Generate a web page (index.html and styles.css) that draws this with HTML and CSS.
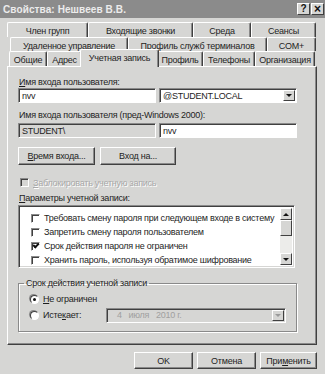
FILE: index.html
```html
<!DOCTYPE html>
<html lang="ru">
<head>
  <meta charset="UTF-8">
  <title>Свойства: Нешвеев В.В.</title>
  <link rel="stylesheet" href="styles.css">
</head>
<body>
  <div class="window">
    <div class="titlebar">
      <span class="title">Свойства: Нешвеев В.В.</span>
      <div class="caption-btns">
        <span class="cbtn">?</span>
        <span class="cbtn cbtn-close">×</span>
      </div>
    </div>

    <div class="tabs">
      <div class="tab-row row-1">
        <span class="tab t-groups">Член групп</span>
        <span class="tab t-calls">Входящие звонки</span>
        <span class="tab t-env">Среда</span>
        <span class="tab t-sessions">Сеансы</span>
      </div>
      <div class="tab-row row-2">
        <span class="tab t-remote">Удаленное управление</span>
        <span class="tab t-ts">Профиль служб терминалов</span>
        <span class="tab t-com">COM+</span>
      </div>
      <div class="tab-row row-3">
        <span class="tab t-general">Общие</span>
        <span class="tab t-address">Адрес</span>
        <span class="tab t-account active">Учетная запись</span>
        <span class="tab t-profile">Профиль</span>
        <span class="tab t-phones">Телефоны</span>
        <span class="tab t-org">Организация</span>
      </div>
    </div>

    <div class="panel">
      <div class="label first"><u>И</u>мя входа пользователя:</div>
      <div class="field-row">
        <div class="input">nvv</div>
        <div class="input combo">
          <span>@STUDENT.LOCAL</span>
          <span class="drop-btn"><span class="arrow"></span></span>
        </div>
      </div>

      <div class="label second">Имя входа пользователя (пред-Windows 2000):</div>
      <div class="field-row tight">
        <div class="input readonly">STUDENT\</div>
        <div class="input">nvv</div>
      </div>

      <div class="btn-row">
        <span class="btn btn-hours"><u>В</u>ремя входа...</span>
        <span class="btn btn-logon">Вход на...</span>
      </div>

      <div class="check-row disabled">
        <span class="checkbox"></span>
        <span class="muted"><u>З</u>аблокировать учетную запись</span>
      </div>

      <div class="label third"><u>П</u>араметры учетной записи:</div>
      <div class="listbox">
        <div class="list-items">
          <div class="list-item"><span class="checkbox"></span>Требовать смену пароля при следующем входе в систему</div>
          <div class="list-item"><span class="checkbox"></span>Запретить смену пароля пользователем</div>
          <div class="list-item"><span class="checkbox checked"></span>Срок действия пароля не ограничен</div>
          <div class="list-item"><span class="checkbox"></span>Хранить пароль, используя обратимое шифрование</div>
        </div>
        <div class="scrollbar">
          <span class="sb-btn"><span class="arrow up"></span></span>
          <span class="sb-thumb"></span>
          <span class="sb-track"></span>
          <span class="sb-btn"><span class="arrow"></span></span>
        </div>
      </div>

      <fieldset class="group">
        <legend>Срок действия учетной записи</legend>
        <div class="radio-row">
          <span class="radio checked"></span>
          <span><u>Н</u>е ограничен</span>
        </div>
        <div class="radio-row">
          <span class="radio"></span>
          <span class="radio-label">Исте<u>к</u>ает:</span>
          <div class="datepicker">
            <span class="date-text">4&nbsp;&nbsp;&nbsp;июля&nbsp;&nbsp;&nbsp;2010 г.</span>
            <span class="drop-btn"><span class="arrow grey"></span></span>
          </div>
        </div>
      </fieldset>
    </div>

    <div class="footer">
      <span class="btn btn-ok">OK</span>
      <span class="btn btn-cancel">Отмена</span>
      <span class="btn btn-apply">При<u>м</u>енить</span>
    </div>
  </div>
</body>
</html>
```

FILE: styles.css
```css
body {
  margin: 0;
  background: #d6d6d4;
}

.window {
  width: 325px;
  height: 374px;
  background: #d6d6d4;
  font-family: "Liberation Sans", Arial, sans-serif;
  font-size: 9px;
  letter-spacing: -0.25px;
  color: #1e1e1e;
  overflow: hidden;
}

u {
  text-decoration: underline;
  text-underline-offset: 1px;
}

/* title bar */
.titlebar {
  height: 18px;
  background: #8b8b8b;
  display: flex;
  align-items: center;
  justify-content: space-between;
  padding: 0 1px 0 3px;
}

.title {
  color: #ececec;
  font-weight: bold;
  font-size: 10px;
  letter-spacing: 0.1px;
}

.caption-btns {
  display: flex;
  gap: 1px;
}

.cbtn {
  width: 11px;
  height: 10px;
  background: #d6d6d4;
  border: 1px solid;
  border-color: #fff #404040 #404040 #fff;
  font-size: 10px;
  font-weight: bold;
  line-height: 10px;
  text-align: center;
  color: #111;
  letter-spacing: 0;
}

.cbtn-close {
  font-size: 12px;
}

/* tabs */
.tabs {
  padding-top: 4px;
}

.tab-row {
  display: flex;
}

.row-1 {
  height: 15px;
  margin-left: 7px;
}

.row-2 {
  height: 14px;
  margin-left: 10px;
}

.row-3 {
  height: 15px;
  margin-left: 9px;
}

.tab {
  box-sizing: border-box;
  height: 100%;
  border-left: 1px solid #fff;
  border-top: 1px solid #fff;
  border-right: 1px solid #404040;
  border-radius: 2px 2px 0 0;
  box-shadow: inset -1px 0 #8a8a8a;
  display: flex;
  align-items: center;
  justify-content: center;
  padding-top: 2px;
  white-space: nowrap;
}

.tab.active {
  position: relative;
  height: 18px;
  margin-top: -2px;
  margin-left: -2px;
  margin-right: -2px;
  padding-top: 0;
  padding-bottom: 2px;
  background: #d6d6d4;
  z-index: 1;
}

.t-groups { width: 81px; }
.t-calls { width: 105px; }
.t-env { width: 58px; }
.t-sessions { width: 65px; }
.t-remote { width: 118px; }
.t-ts { width: 139px; }
.t-com { width: 49px; }
.t-general { width: 38px; }
.t-address { width: 35px; }
.t-account { width: 79px; }
.t-profile { width: 46px; }
.t-phones { width: 52px; }
.t-org { width: 60px; }

/* panel */
.panel {
  box-sizing: border-box;
  width: 310px;
  height: 279px;
  margin-left: 7px;
  border: 1px solid;
  border-color: #fff #404040 #404040 #fff;
  box-shadow: inset -1px -1px #8a8a8a;
  padding: 0 19px 0 10px;
}

.label {
  line-height: 11px;
  padding-left: 1px;
}

.label.first { margin-top: 10px; }
.label.second { margin-top: 7px; }
.label.third { margin-top: 5px; }

.field-row {
  display: flex;
  gap: 3px;
}

.field-row.tight {
  margin-top: 2px;
}

.input {
  box-sizing: border-box;
  width: 138px;
  height: 15px;
  background: #fff;
  border: 1px solid;
  border-color: #8a8a8a #fff #fff #8a8a8a;
  box-shadow: inset 1px 1px #404040;
  padding-left: 3px;
  display: flex;
  align-items: center;
}

.input.readonly {
  background: #d6d6d4;
}

.combo {
  justify-content: space-between;
  padding-right: 1px;
}

.drop-btn {
  box-sizing: border-box;
  width: 12px;
  height: 11px;
  background: #d6d6d4;
  border: 1px solid;
  border-color: #fff #404040 #404040 #fff;
  display: flex;
  align-items: center;
  justify-content: center;
}

.arrow {
  width: 0;
  height: 0;
  border-left: 3px solid transparent;
  border-right: 3px solid transparent;
  border-top: 3px solid #111;
}

.arrow.up {
  border-top: 0;
  border-bottom: 3px solid #111;
}

.arrow.grey {
  border-top-color: #9a9a9a;
}

/* buttons */
.btn-row {
  display: flex;
  gap: 5px;
  margin-top: 9px;
}

.btn {
  box-sizing: border-box;
  height: 18px;
  border: 1px solid;
  border-color: #fff #404040 #404040 #fff;
  box-shadow: inset -1px -1px #8a8a8a;
  display: flex;
  align-items: center;
  justify-content: center;
}

.btn-hours { width: 77px; }
.btn-logon { width: 76px; }

/* checkboxes */
.check-row {
  display: flex;
  align-items: center;
  gap: 4px;
  margin-top: 12px;
  height: 11px;
  padding-left: 2px;
}

.checkbox {
  box-sizing: border-box;
  flex: none;
  width: 9px;
  height: 9px;
  background: #fff;
  border: 1px solid;
  border-color: #8a8a8a #fff #fff #8a8a8a;
  box-shadow: inset 1px 1px #404040;
  position: relative;
}

.disabled .checkbox {
  background: #d6d6d4;
}

.muted {
  color: #a8a8a8;
  text-shadow: 1px 1px #fff;
}

.checkbox.checked::after {
  content: "";
  position: absolute;
  left: 1px;
  top: 0;
  width: 4px;
  height: 2px;
  border-left: 2px solid #111;
  border-bottom: 2px solid #111;
  transform: rotate(-45deg);
}

/* listbox */
.listbox {
  box-sizing: border-box;
  width: 277px;
  height: 63px;
  margin-top: 1px;
  background: #fff;
  border: 1px solid;
  border-color: #8a8a8a #fff #fff #8a8a8a;
  box-shadow: inset 1px 1px #404040, inset -1px -1px #d6d6d4;
  display: flex;
  padding: 2px;
}

.list-items {
  flex: 1;
  padding: 3px 0 0 10px;
  overflow: hidden;
}

.list-item {
  height: 14px;
  display: flex;
  align-items: center;
  gap: 4px;
  white-space: nowrap;
}

.scrollbar {
  width: 12px;
  display: flex;
  flex-direction: column;
}

.sb-btn,
.sb-thumb {
  box-sizing: border-box;
  background: #d6d6d4;
  border: 1px solid;
  border-color: #fff #404040 #404040 #fff;
  display: flex;
  align-items: center;
  justify-content: center;
}

.sb-btn {
  height: 12px;
}

.sb-thumb {
  height: 16px;
}

.sb-track {
  flex: 1;
  background: #ececea;
}

/* group box */
.group {
  box-sizing: border-box;
  width: 279px;
  height: 54px;
  margin: 10px 0 0;
  padding: 2px 0 0 11px;
  border: 1px solid #8a8a8a;
  box-shadow: inset 1px 1px #fff, 1px 1px #fff;
  min-width: 0;
}

.group legend {
  padding: 0 2px;
  margin-left: -6px;
  line-height: 11px;
}

.radio-row {
  display: flex;
  align-items: center;
  height: 16px;
  gap: 4px;
}

.radio {
  box-sizing: border-box;
  flex: none;
  width: 9px;
  height: 9px;
  border-radius: 50%;
  background: #fff;
  border: 1px solid;
  border-color: #404040 #fff #fff #404040;
  box-shadow: -1px -1px 0 #8a8a8a;
  display: flex;
  align-items: center;
  justify-content: center;
}

.radio.checked::after {
  content: "";
  width: 3px;
  height: 3px;
  border-radius: 50%;
  background: #111;
}

.radio-label {
  width: 59px;
}

.datepicker {
  box-sizing: border-box;
  width: 180px;
  height: 15px;
  border: 1px solid;
  border-color: #8a8a8a #fff #fff #8a8a8a;
  box-shadow: inset 1px 1px #404040;
  display: flex;
  align-items: center;
  justify-content: space-between;
  padding: 0 1px 0 10px;
}

.date-text {
  color: #a0a0a0;
}

/* footer */
.footer {
  display: flex;
  justify-content: flex-end;
  gap: 4px;
  padding-right: 8px;
  margin-top: 7px;
}

.footer .btn {
  height: 17px;
}

.btn-ok { width: 59px; }
.btn-cancel { width: 59px; }
.btn-apply { width: 57px; }
```
